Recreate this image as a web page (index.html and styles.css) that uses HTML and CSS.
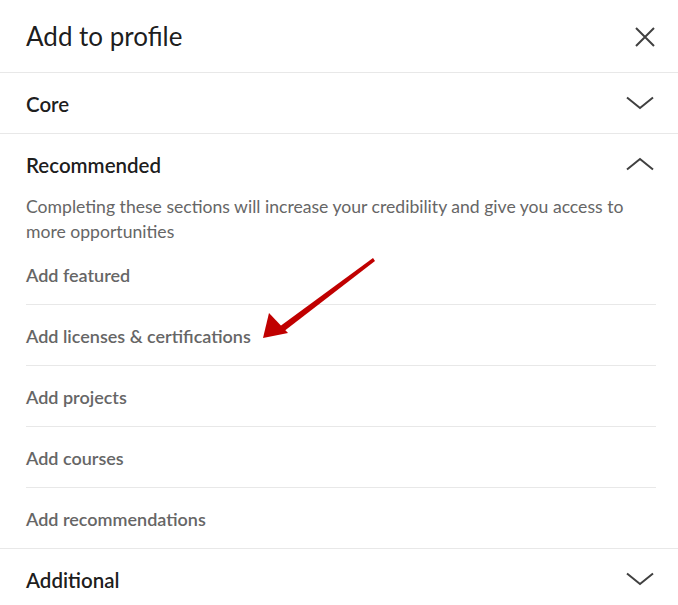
FILE: index.html
```html
<!DOCTYPE html>
<html lang="en">
<head>
    <meta charset="UTF-8">
    <meta name="viewport" content="width=device-width, initial-scale=1.0">
    <title>Add to profile</title>
    <link rel="stylesheet" href="styles.css">
</head>
<body>
    <div class="modal">
        <div class="modal-header">
            <h1>Add to profile</h1>
            <button class="close" aria-label="Dismiss">
                <svg width="22" height="20" viewBox="0 0 22 20"><path d="M2 1 L20 19 M20 1 L2 19" stroke="#404040" stroke-width="2" fill="none"/></svg>
            </button>
        </div>

        <div class="section">
            <div class="section-head">
                <h2>Core</h2>
                <svg class="chevron" width="28" height="14" viewBox="0 0 28 14"><path d="M1 1.5 L14 12 L27 1.5" stroke="#404040" stroke-width="2" fill="none"/></svg>
            </div>
        </div>

        <div class="section">
            <div class="section-head">
                <h2>Recommended</h2>
                <svg class="chevron" width="28" height="14" viewBox="0 0 28 14"><path d="M1 12.5 L14 2 L27 12.5" stroke="#404040" stroke-width="2" fill="none"/></svg>
            </div>
            <p class="desc">Completing these sections will increase your credibility and give you access to more opportunities</p>
            <ul class="items">
                <li>Add featured</li>
                <li>Add licenses &amp; certifications</li>
                <li>Add projects</li>
                <li>Add courses</li>
                <li>Add recommendations</li>
            </ul>
        </div>

        <div class="section">
            <div class="section-head">
                <h2>Additional</h2>
                <svg class="chevron" width="28" height="14" viewBox="0 0 28 14"><path d="M1 1.5 L14 12 L27 1.5" stroke="#404040" stroke-width="2" fill="none"/></svg>
            </div>
        </div>

        <!-- flecha roja -->
        <svg class="arrow" width="130" height="100" viewBox="0 0 130 100">
            <path d="M118 6 L120 9 L28 80 L24 75 Z" fill="#c00000"/>
            <path d="M14 61 L8 86 L33 81 Z" fill="#c00000"/>
        </svg>
    </div>
</body>
</html>
```

FILE: styles.css
```css
/* General */
body {
    margin: 0;
    padding: 0;
    background: #fff;
    font-family: Lato, "Open Sans", sans-serif;
    color: rgba(0, 0, 0, 0.9);
}

.modal {
    position: relative;
    width: 678px;
    overflow: hidden;
}

/* Cabecera */
.modal-header {
    height: 72px;
    display: flex;
    align-items: center;
    justify-content: space-between;
    padding: 0 22px 0 26px;
    border-bottom: 1px solid #e8e8e8;
}

.modal-header h1 {
    margin: 0;
    font-size: 26px;
    font-weight: 400;
}

.close {
    background: none;
    border: none;
    padding: 0;
    margin-top: 2px;
    display: flex;
    cursor: pointer;
}

/* Secciones */
.section {
    border-bottom: 1px solid #e8e8e8;
}

.section-head {
    height: 60px;
    display: flex;
    align-items: center;
    justify-content: space-between;
    padding: 0 24px 0 26px;
}

.section-head h2 {
    margin: 2px 0 0;
    font-size: 20.5px;
    font-weight: 600;
}

.desc {
    margin: 0;
    padding: 0 30px 0 26px;
    font-size: 17.6px;
    line-height: 25px;
    color: #666;
}

.items {
    list-style: none;
    margin: 0 22px 0 26px;
    padding: 0;
}

.items li {
    height: 60px;
    line-height: 62px;
    font-size: 18px;
    font-weight: 600;
    color: #666;
    border-bottom: 1px solid #e8e8e8;
}

.items li:last-child {
    border-bottom: none;
}

.arrow {
    position: absolute;
    left: 255px;
    top: 252px;
}
```
